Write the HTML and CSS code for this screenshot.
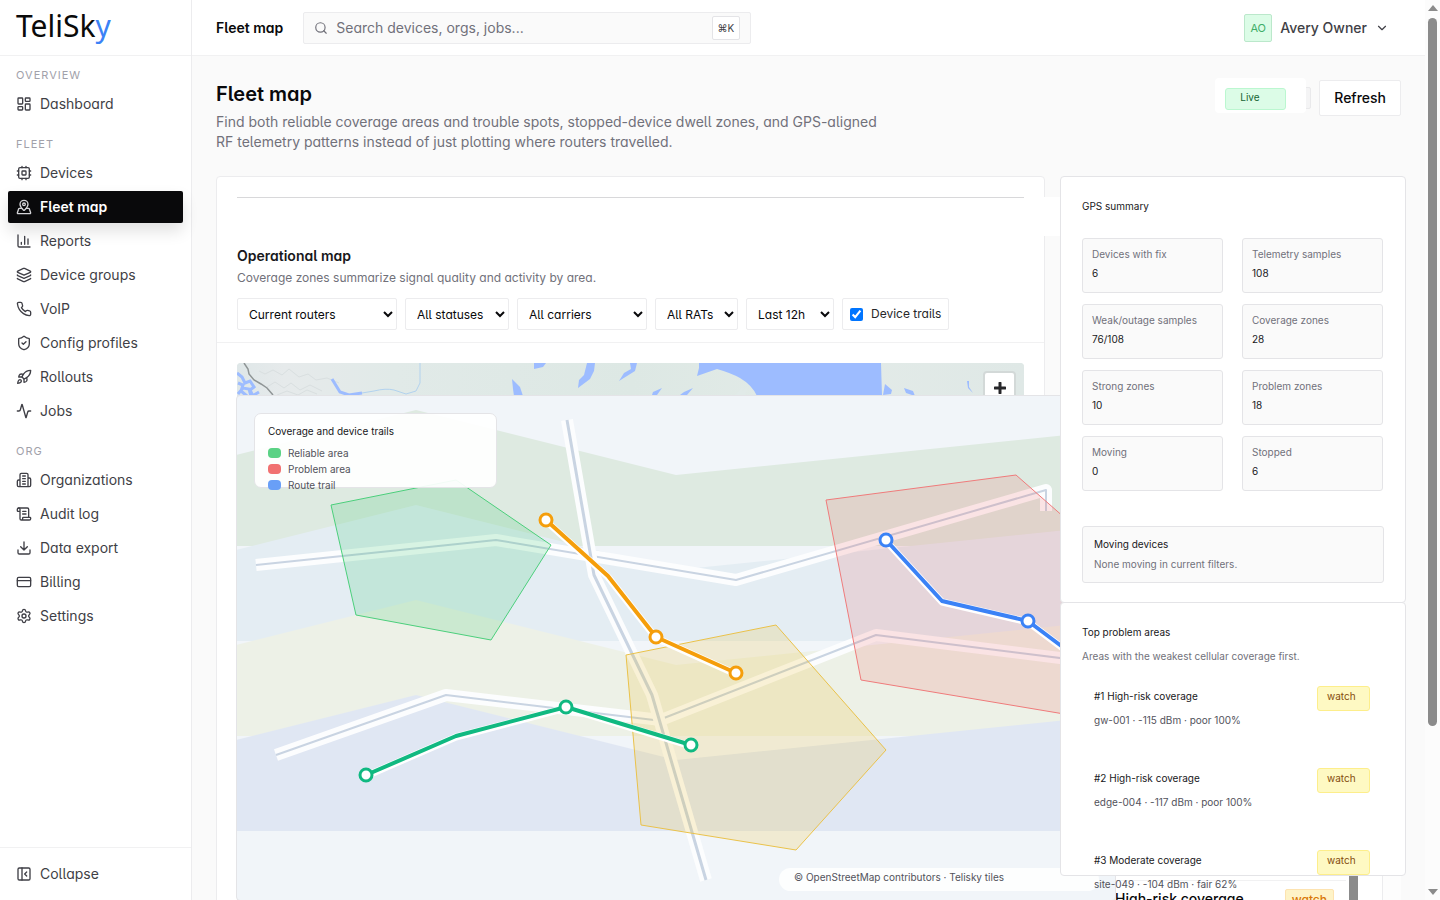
FILE: index.html
```html
<!DOCTYPE html>
<html lang="en">
<head>
<meta charset="utf-8">
<title>Fleet map - TeliSky</title>
<link rel="stylesheet" href="styles.css">
</head>
<body>
<div class="app">
  <aside class="sidebar">
    <a class="logo" href="#">TeliSk<span class="logo-accent">y</span></a>
    <nav class="nav">
      <div class="nav-group">
        <h2 class="nav-label">OVERVIEW</h2>
        <a class="nav-item" href="#"><svg class="icon" viewBox="0 0 24 24"><rect x="3" y="3" width="7" height="9" rx="1"/><rect x="14" y="3" width="7" height="5" rx="1"/><rect x="14" y="12" width="7" height="9" rx="1"/><rect x="3" y="16" width="7" height="5" rx="1"/></svg>Dashboard</a>
      </div>
      <div class="nav-group">
        <h2 class="nav-label">FLEET</h2>
        <a class="nav-item" href="#"><svg class="icon" viewBox="0 0 24 24"><rect x="4" y="4" width="16" height="16" rx="2"/><rect x="9" y="9" width="6" height="6" rx="1"/><path d="M15 2v2M15 20v2M2 15h2M2 9h2M20 15h2M20 9h2M9 2v2M9 20v2"/></svg>Devices</a>
        <a class="nav-item active" href="#"><svg class="icon" viewBox="0 0 24 24"><path d="M18 8c0 3.613-3.869 7.429-5.393 8.795a1 1 0 0 1-1.214 0C9.87 15.429 6 11.613 6 8a6 6 0 0 1 12 0"/><circle cx="12" cy="8" r="2"/><path d="M8.714 14h-3.71a1 1 0 0 0-.948.683l-2.004 6A1 1 0 0 0 3 22h18a1 1 0 0 0 .948-1.316l-2-6a1 1 0 0 0-.949-.684h-3.712"/></svg>Fleet map</a>
        <a class="nav-item" href="#"><svg class="icon" viewBox="0 0 24 24"><path d="M3 3v16a2 2 0 0 0 2 2h16M18 17V9M13 17V5M8 17v-3"/></svg>Reports</a>
        <a class="nav-item" href="#"><svg class="icon" viewBox="0 0 24 24"><path d="M12.83 2.18a2 2 0 0 0-1.66 0L2.6 6.08a1 1 0 0 0 0 1.83l8.58 3.91a2 2 0 0 0 1.66 0l8.58-3.9a1 1 0 0 0 0-1.83z"/><path d="M2 12a1 1 0 0 0 .58.91l8.6 3.91a2 2 0 0 0 1.65 0l8.58-3.9A1 1 0 0 0 22 12"/><path d="M2 17a1 1 0 0 0 .58.91l8.6 3.91a2 2 0 0 0 1.65 0l8.58-3.9A1 1 0 0 0 22 17"/></svg>Device groups</a>
        <a class="nav-item" href="#"><svg class="icon" viewBox="0 0 24 24"><path d="M22 16.92v3a2 2 0 0 1-2.18 2 19.79 19.79 0 0 1-8.63-3.07 19.5 19.5 0 0 1-6-6 19.79 19.79 0 0 1-3.07-8.67A2 2 0 0 1 4.11 2h3a2 2 0 0 1 2 1.72c.127.96.361 1.903.7 2.81a2 2 0 0 1-.45 2.11L8.09 9.91a16 16 0 0 0 6 6l1.27-1.27a2 2 0 0 1 2.11-.45c.907.339 1.85.573 2.81.7A2 2 0 0 1 22 16.92z"/></svg>VoIP</a>
        <a class="nav-item" href="#"><svg class="icon" viewBox="0 0 24 24"><path d="M20 13c0 5-3.5 7.5-7.66 8.95a1 1 0 0 1-.67-.01C7.5 20.5 4 18 4 13V6a1 1 0 0 1 1-1c2 0 4.5-1.2 6.24-2.72a1.17 1.17 0 0 1 1.52 0C14.51 3.81 17 5 19 5a1 1 0 0 1 1 1z"/><path d="m9 12 2 2 4-4"/></svg>Config profiles</a>
        <a class="nav-item" href="#"><svg class="icon" viewBox="0 0 24 24"><path d="M4.5 16.5c-1.5 1.26-2 5-2 5s3.74-.5 5-2c.71-.84.7-2.13-.09-2.91a2.18 2.18 0 0 0-2.91-.09zM12 15l-3-3a22 22 0 0 1 2-3.95A12.88 12.88 0 0 1 22 2c0 2.72-.78 7.5-6 11a22.35 22.35 0 0 1-4 2z"/><path d="M9 12H4s.55-3.03 2-4c1.62-1.08 5 0 5 0M12 15v5s3.03-.55 4-2c1.08-1.62 0-5 0-5"/></svg>Rollouts</a>
        <a class="nav-item" href="#"><svg class="icon" viewBox="0 0 24 24"><path d="M22 12h-2.48a2 2 0 0 0-1.93 1.46l-2.35 8.36a.25.25 0 0 1-.48 0L9.24 2.18a.25.25 0 0 0-.48 0l-2.35 8.36A2 2 0 0 1 4.49 12H2"/></svg>Jobs</a>
      </div>
      <div class="nav-group">
        <h2 class="nav-label">ORG</h2>
        <a class="nav-item" href="#"><svg class="icon" viewBox="0 0 24 24"><path d="M6 22V4a2 2 0 0 1 2-2h8a2 2 0 0 1 2 2v18ZM6 12H4a2 2 0 0 0-2 2v6a2 2 0 0 0 2 2h2M18 9h2a2 2 0 0 1 2 2v9a2 2 0 0 1-2 2h-2M10 6h4M10 10h4M10 14h4M10 18h4"/></svg>Organizations</a>
        <a class="nav-item" href="#"><svg class="icon" viewBox="0 0 24 24"><path d="M15 12h-5M15 8h-5M19 17V5a2 2 0 0 0-2-2H4"/><path d="M8 21h12a2 2 0 0 0 2-2v-1a1 1 0 0 0-1-1H11a1 1 0 0 0-1 1v1a2 2 0 1 1-4 0V5a2 2 0 1 0-4 0v2a1 1 0 0 0 1 1h3"/></svg>Audit log</a>
        <a class="nav-item" href="#"><svg class="icon" viewBox="0 0 24 24"><path d="M12 15V3M21 15v4a2 2 0 0 1-2 2H5a2 2 0 0 1-2-2v-4M7 10l5 5 5-5"/></svg>Data export</a>
        <a class="nav-item" href="#"><svg class="icon" viewBox="0 0 24 24"><rect x="2" y="5" width="20" height="14" rx="2"/><path d="M2 10h20"/></svg>Billing</a>
        <a class="nav-item" href="#"><svg class="icon" viewBox="0 0 24 24"><path d="M9.671 4.136a2.34 2.34 0 0 1 4.659 0 2.34 2.34 0 0 0 3.319 1.915 2.34 2.34 0 0 1 2.33 4.033 2.34 2.34 0 0 0 0 3.831 2.34 2.34 0 0 1-2.33 4.033 2.34 2.34 0 0 0-3.319 1.915 2.34 2.34 0 0 1-4.659 0 2.34 2.34 0 0 0-3.32-1.915 2.34 2.34 0 0 1-2.33-4.033 2.34 2.34 0 0 0 0-3.831A2.34 2.34 0 0 1 6.35 6.051a2.34 2.34 0 0 0 3.319-1.915"/><circle cx="12" cy="12" r="3"/></svg>Settings</a>
      </div>
    </nav>
    <div class="sidebar-foot">
      <button class="nav-item" type="button"><svg class="icon" viewBox="0 0 24 24"><rect x="3" y="3" width="18" height="18" rx="2"/><path d="M9 3v18M16 15l-3-3 3-3"/></svg>Collapse</button>
    </div>
  </aside>

  <div class="workspace">
    <header class="topbar">
      <strong class="crumb">Fleet map</strong>
      <div class="search">
        <svg class="search-icon" viewBox="0 0 24 24"><circle cx="11" cy="11" r="8"/><path d="m21 21-4.3-4.3"/></svg>
        <input class="search-input" type="search" aria-label="Search" placeholder="Search devices, orgs, jobs...">
        <kbd class="kbd">⌘K</kbd>
      </div>
      <button class="account" type="button"><span class="avatar">AO</span>Avery Owner<svg class="chev" viewBox="0 0 24 24"><path d="m6 9 6 6 6-6"/></svg></button>
    </header>

    <main class="content">
      <div class="page-head">
        <div class="page-intro">
          <h1 class="page-title">Fleet map</h1>
          <p class="page-desc">Find both reliable coverage areas and trouble spots, stopped-device dwell zones, and GPS-aligned RF telemetry patterns instead of just plotting where routers travelled.</p>
        </div>
        <div class="page-actions">
          <div class="status-chip"><div class="live-box"><span class="live">Live</span></div></div>
          <button class="refresh" type="button">Refresh</button>
        </div>
      </div>

      <div class="columns">
        <section class="map-card">
          <div class="banner"><div class="banner-rule"></div></div>
          <div class="map-head">
            <h2 class="map-title">Operational map</h2>
            <p class="map-desc">Coverage zones summarize signal quality and activity by area.</p>
            <div class="filters">
              <select class="filter f-routers" aria-label="Routers"><option>Current routers</option></select>
              <select class="filter f-status" aria-label="Status"><option>All statuses</option></select>
              <select class="filter f-carrier" aria-label="Carrier"><option>All carriers</option></select>
              <select class="filter f-rat" aria-label="RAT"><option>All RATs</option></select>
              <select class="filter f-range" aria-label="Time range"><option>Last 12h</option></select>
              <label class="filter-check"><input class="check" type="checkbox" checked>Device trails</label>
            </div>
          </div>
          <div class="map-body">
            <div class="basemap">
              <svg class="terrain" viewBox="0 0 788 40" preserveAspectRatio="xMinYMin slice">
                <defs>
                  <linearGradient id="land" x1="0" x2="1" y1="0" y2="0"><stop offset="0" stop-color="#dfe7e8"/><stop offset=".06" stop-color="#e6eaeb"/><stop offset=".2" stop-color="#e1eae8"/><stop offset=".5" stop-color="#dde8e4"/><stop offset=".75" stop-color="#e3ebe8"/><stop offset="1" stop-color="#dfe8e6"/></linearGradient>
                </defs>
                <rect width="788" height="40" fill="url(#land)"/>
                <path d="M22 8l6 3 8-4 9 5 7-6 10 8 9-3 8 6 11-2 12 5M30 24l8-5 9 6 7-5 9 7 10-5 12 6M40 32l10-4 11 4 9-5 10 4" fill="none" stroke="#d9dfe0" stroke-width="1"/>
                <path d="M7 0l4 6 1 5 5 6 7 4 6 4 6 7" fill="none" stroke="#8f9596" stroke-width="1.5"/>
                <g fill="#9dbcff">
                  <path d="M462 0v5l-2 8 20-7q14 4 23 9 12 7 17 18h125l-1-33z"/>
                  <path d="M297 0h12l-3 4-9 2zM350 0h8l-1 8-4 8-12 9 1-8 5-5zM393 0h7l-2 8-8 5-8 5 5-8 7-4zM416 29l9-4-5 7h-5zM447 29l9-4-6 7h-7zM275 16l8 8 3 9h-9l-1-7zM648 21l7 6-1 4-8 1zM667 25l9 3 2 5-9-3zM730 18l2 0v6l4 6-5-5z"/>
                </g>
                <path d="M499 32l5-6 2-4-1 6 6-4-3 8z" fill="#e1eae8"/>
                <path d="M0 10l5 4 3 6 5-2 4 6-4 3 3 6M1 20l5 2-2 6 6 5M1 31l5-6 6 1 2 7M17 32l5-3" fill="none" stroke="#9dbcff" stroke-width="3"/>
                <path d="M95 16l8 13 9 3 13-2" fill="none" stroke="#9dbcff" stroke-width="3"/>
                <path d="M125 30l12-2q12-3 20-1l12 4 10-3 4-8V0" fill="none" stroke="#b2d2ee" stroke-width="1"/>
              </svg>
              <button class="zoom-in" type="button" aria-label="Zoom in"><svg class="plus" viewBox="0 0 12 12"><path d="M6 1v10M1 6h10"/></svg></button>
            </div>
            <div class="coverage">
              <svg class="coverage-art" viewBox="0 0 880 506" preserveAspectRatio="xMinYMin slice">
                <path fill="#deeae1" d="M0 60 180 15 440 80 880 35V151H0z"/>
                <path fill="#e4edf3" d="M0 155 180 110 440 175 880 130V246H0z"/>
                <path fill="#edf1e7" d="M0 250 180 205 440 270 880 225V341H0z"/>
                <path fill="#e0e7f3" d="M0 345 180 300 440 365 880 320V436H0z"/>
                <g fill="none" stroke-linejoin="round">
                  <path stroke="#fcfdfe" stroke-width="12" d="M20 170 260 145 500 185 810 95V116M40 360 210 300 425 325 640 240 880 270"/>
                  <path stroke="#c9d4e2" stroke-width="2" d="M20 170 260 145 500 185 810 95V116M40 360 210 300 418 325M428 323 640 240 880 270"/>
                  <path stroke="#fcfdfe" stroke-width="12" d="M331 25 358 180 416 300 470 485"/>
                  <path stroke="#c9d4e2" stroke-width="3" d="M331 25 358 180 416 300 470 485"/>
                </g>
                <path fill="#22c55e" fill-opacity=".17" stroke="#4ccf7c" d="M95 110 220 85 315 150 255 245 120 220z"/>
                <path fill="#ef4444" fill-opacity=".14" stroke="#ef7b7b" d="M590 105 780 80 870 159V326L625 285z"/>
                <path fill="#eab308" fill-opacity=".16" stroke="#eac24a" d="M390 260 540 230 650 355 560 455 405 430z"/>
                <g fill="none" stroke="#fff" stroke-width="7" stroke-linejoin="round">
                  <path d="M310 126 372 182 420 243 500 279"/>
                  <path d="M650 146 706 207 792 227 860 278"/>
                  <path d="M130 381 220 342 330 313 455 351"/>
                </g>
                <g fill="none" stroke-width="4" stroke-linejoin="round">
                  <path stroke="#f59e0b" d="M310 125 372 181 420 242 500 278"/>
                  <path stroke="#3b82f6" d="M650 145 706 206 792 226 860 277"/>
                  <path stroke="#10b981" d="M130 380 220 341 330 312 455 350"/>
                </g>
                <g fill="#fff" stroke-width="3">
                  <g stroke="#f59e0b"><circle cx="310" cy="125" r="6"/><circle cx="420" cy="242" r="6"/><circle cx="500" cy="278" r="6"/></g>
                  <g stroke="#3b82f6"><circle cx="650" cy="145" r="6"/><circle cx="792" cy="226" r="6"/></g>
                  <g stroke="#10b981"><circle cx="130" cy="380" r="6"/><circle cx="330" cy="312" r="6"/><circle cx="455" cy="350" r="6"/></g>
                </g>
              </svg>
              <div class="legend">
                <h3 class="legend-title">Coverage and device trails</h3>
                <ul class="legend-list">
                  <li class="legend-item"><i class="swatch s-green"></i>Reliable area</li>
                  <li class="legend-item"><i class="swatch s-red"></i>Problem area</li>
                  <li class="legend-item"><i class="swatch s-blue"></i>Route trail</li>
                </ul>
              </div>
              <div class="credit">© OpenStreetMap contributors · Telisky tiles</div>
            </div>
          </div>
        </section>

        <aside class="rail">
          <section class="panel">
            <h2 class="panel-title">GPS summary</h2>
            <dl class="stats">
              <div class="stat"><dt>Devices with fix</dt><dd>6</dd></div>
              <div class="stat"><dt>Telemetry samples</dt><dd>108</dd></div>
              <div class="stat"><dt>Weak/outage samples</dt><dd>76/108</dd></div>
              <div class="stat"><dt>Coverage zones</dt><dd>28</dd></div>
              <div class="stat"><dt>Strong zones</dt><dd>10</dd></div>
              <div class="stat"><dt>Problem zones</dt><dd>18</dd></div>
              <div class="stat"><dt>Moving</dt><dd>0</dd></div>
              <div class="stat"><dt>Stopped</dt><dd>6</dd></div>
            </dl>
            <div class="moving">
              <h3 class="moving-title">Moving devices</h3>
              <p class="moving-text">None moving in current filters.</p>
            </div>
          </section>
          <section class="panel areas-panel">
            <h2 class="panel-title">Top problem areas</h2>
            <p class="panel-sub">Areas with the weakest cellular coverage first.</p>
            <ul class="areas">
              <li class="area"><div><div class="area-name">#1 High-risk coverage</div><div class="area-meta">gw-001 · -115 dBm · poor 100%</div></div><span class="watch">watch</span></li>
              <li class="area"><div><div class="area-name">#2 High-risk coverage</div><div class="area-meta">edge-004 · -117 dBm · poor 100%</div></div><span class="watch">watch</span></li>
              <li class="area"><div><div class="area-name">#3 Moderate coverage</div><div class="area-meta">site-049 · -104 dBm · fair 62%</div></div><span class="watch">watch</span></li>
            </ul>
          </section>
          <section class="backlist">
            <div class="backlist-inner">
              <div class="backlist-row"><span>High-risk coverage</span><span class="back-watch">watch</span></div>
              <div class="backlist-thumb"></div>
            </div>
          </section>
        </aside>
      </div>
    </main>
  </div>

  <div class="scrollbar" aria-hidden="true">
    <div class="arrow-up"></div>
    <div class="track"><div class="thumb"></div></div>
    <div class="arrow-down"></div>
  </div>
</div>
</body>
</html>
```
FILE: styles.css
```css
* { box-sizing: border-box; }

body {
  margin: 0;
  font-family: Inter, "Liberation Sans", sans-serif;
  font-size: 14px;
  line-height: 20px;
  color: #09090b;
  background: #fafafa;
  font-feature-settings: "cv11", "cv05";
}

h1, h2, h3, p, ul, dl, dd { margin: 0; padding: 0; }
ul { list-style: none; }
a { color: inherit; text-decoration: none; }
button, input, select { font: inherit; font-feature-settings: inherit; color: inherit; }

.app { display: flex; height: 100vh; overflow: hidden; }

/* Sidebar */
.sidebar {
  flex: 0 0 192px;
  display: flex;
  flex-direction: column;
  background: #fff;
  border-right: 1px solid #ececee;
}
.logo {
  display: flex;
  align-items: center;
  height: 56px;
  padding: 0 16px 4px;
  border-bottom: 1px solid #f1f1f2;
  font-family: "Noto Sans", sans-serif;
  font-size: 30px;
  color: #0a0a0a;
}
.logo-accent { color: #3b82f6; }
.nav {
  flex: 1;
  display: flex;
  flex-direction: column;
  gap: 16px;
  padding: 11px 8px;
}
.nav-group { display: flex; flex-direction: column; gap: 2px; }
.nav-label {
  padding: 0 8px;
  margin-bottom: 3px;
  font-size: 11px;
  line-height: 16px;
  font-weight: 400;
  letter-spacing: 1px;
  color: #a1a1aa;
}
.nav-item {
  display: flex;
  align-items: center;
  gap: 8px;
  height: 32px;
  padding: 0 8px;
  border: 0;
  border-radius: 2px;
  background: none;
  font-weight: 400;
  color: #3f3f46;
}
.nav-item.active {
  background: #09090b;
  color: #fff;
  font-weight: 600;
  box-shadow: 0 8px 16px rgba(0, 0, 0, .12);
}
.icon {
  width: 16px;
  height: 16px;
  fill: none;
  stroke: currentColor;
  stroke-width: 2;
  stroke-linecap: round;
  stroke-linejoin: round;
}
.active .icon { stroke: #d4d4d8; }
.sidebar-foot { padding: 10px 8px; border-top: 1px solid #f1f1f2; }

/* Top bar */
.workspace { flex: 1; min-width: 0; display: flex; flex-direction: column; }
.topbar {
  flex: none;
  display: flex;
  align-items: center;
  gap: 20px;
  height: 56px;
  padding: 0 36px 0 24px;
  background: #fff;
  border-bottom: 1px solid #f1f1f2;
}
.crumb { font-weight: 600; }
.search {
  flex: 0 1 448px;
  display: flex;
  align-items: center;
  gap: 8px;
  height: 32px;
  padding: 0 10px;
  border: 1px solid #ececee;
  border-radius: 2px;
  background: #fafafa;
}
.search-icon {
  width: 14px;
  height: 14px;
  fill: none;
  stroke: #71717a;
  stroke-width: 2;
  stroke-linecap: round;
}
.search-input {
  flex: 1;
  min-width: 0;
  padding: 0;
  border: 0;
  outline: 0;
  background: none;
}
.search-input::placeholder { color: #71717a; opacity: 1; }
.kbd {
  padding: 0 5px;
  border: 1px solid #e4e4e7;
  border-radius: 2px;
  background: #fff;
  font-family: Inter, "DejaVu Sans", sans-serif;
  font-size: 10px;
  line-height: 22px;
  color: #3f3f46;
}
.account {
  display: flex;
  align-items: center;
  gap: 8px;
  margin-left: auto;
  padding: 0;
  border: 0;
  background: none;
  font-weight: 500;
  color: #3f3f46;
}
.avatar {
  width: 28px;
  border: 1px solid #bbe8cb;
  border-radius: 2px;
  background: #dcfce7;
  font-size: 11px;
  line-height: 26px;
  font-weight: 400;
  text-align: center;
  color: #3fae68;
}
.chev {
  width: 14px;
  height: 14px;
  fill: none;
  stroke: #3f3f46;
  stroke-width: 2;
  stroke-linecap: round;
  stroke-linejoin: round;
}

/* Page */
.content {
  flex: 1;
  min-height: 0;
  overflow: hidden;
  padding: 24px 19px 0 24px;
}
.page-head {
  display: flex;
  justify-content: space-between;
  align-items: flex-start;
  padding-right: 5px;
  margin-bottom: 24px;
}
.page-intro { max-width: 672px; }
.page-title { margin-bottom: 4px; font-size: 20px; line-height: 28px; font-weight: 600; }
.page-desc { color: #71717a; }
.page-actions { display: flex; align-items: center; gap: 8px; }
.status-chip {
  position: relative;
  width: 84px;
  height: 22px;
  border: 1px solid #e9e9eb;
  border-radius: 2px;
  background: #f4f4f5;
}
.live-box {
  position: absolute;
  top: -10px;
  right: 4px;
  width: 91px;
  padding: 10px;
  height: 35px;
  border-radius: 4px;
  background: #fff;
}
.live {
  display: block;
  width: 61px;
  height: 22px;
  padding-left: 14px;
  border: 1px solid #bbf7d0;
  border-radius: 3px;
  background: #dcfce7;
  font-size: 10px;
  line-height: 16px;
  color: #166534;
  font-feature-settings: normal;
}
.refresh {
  height: 36px;
  padding: 0 14px;
  border: 1px solid #ececee;
  border-radius: 2px;
  background: #fff;
  font-weight: 500;
}

.columns {
  display: grid;
  grid-template-columns: 829fr 346fr;
  align-items: start;
  gap: 15px;
}

/* Map card */
.map-card {
  border: 1px solid #ececee;
  border-radius: 4px;
  background: #fff;
  padding-top: 20px;
}
.banner {
  position: relative;
  height: 39px;
  margin: 0 -16px 0 20px;
  padding-right: 36px;
  background: #fff;
}
.banner-rule { height: 1px; background: #d8d8da; }
.map-head { padding: 10px 20px 12px; border-bottom: 1px solid #f1f1f2; }
.map-title { font-size: 14px; line-height: 20px; font-weight: 600; color: #18181b; }
.map-desc { margin: 3px 0 11px; font-size: 12px; line-height: 18px; color: #71717a; }
.filters { display: flex; gap: 8px; }
.filter {
  height: 32px;
  padding: 0 0 0 7px;
  border: 1px solid #ececee;
  border-radius: 2px;
  background: #fff;
  font-size: 12px;
  color: #09090b;
}
.f-routers { width: 160px; }
.f-status { width: 104px; }
.f-carrier { width: 130px; }
.f-rat { width: 83px; }
.f-range { width: 88px; }
.filter-check {
  display: flex;
  align-items: center;
  gap: 8px;
  height: 32px;
  padding: 0 7px;
  border: 1px solid #ececee;
  border-radius: 2px;
  font-size: 12px;
  color: #27272a;
}
.check { width: 13px; height: 13px; margin: 0; accent-color: #0075ff; }

.map-body { position: relative; padding: 20px 20px 0; }
.basemap {
  position: relative;
  height: 540px;
  overflow: hidden;
  border-radius: 4px 4px 0 0;
  background: #e1eae8;
}
.terrain { display: block; width: 100%; height: 40px; }
.zoom-in {
  position: absolute;
  top: 8px;
  right: 8px;
  width: 33px;
  height: 33px;
  display: grid;
  place-items: center;
  padding: 0;
  border: 2px solid #d3d9d8;
  border-radius: 4px;
  background: #fff;
}
.plus { width: 12px; height: 12px; fill: none; stroke: #27272a; stroke-width: 3; stroke-linecap: round; }

.coverage {
  position: absolute;
  z-index: 1;
  top: 52px;
  left: 19px;
  width: 880px;
  height: 506px;
  overflow: hidden;
  border: 1px solid #e4e4e7;
  border-radius: 4px;
  background: #f1f5f9;
}
.coverage-art { display: block; width: 880px; height: 506px; margin: -1px; }
.legend {
  position: absolute;
  top: 17px;
  left: 17px;
  width: 243px;
  height: 75px;
  padding: 9px 13px;
  border: 1px solid #e4e4e7;
  border-radius: 7px;
  background: rgba(255, 255, 255, .93);
  font-size: 10px;
  line-height: 16px;
  font-feature-settings: normal;
}
.legend-title { margin-bottom: 6px; font-size: 10px; line-height: 16px; font-weight: 400; color: #18181b; }
.legend-item { display: flex; align-items: center; gap: 7px; color: #52525b; }
.swatch { width: 13px; height: 10px; border-radius: 4px; }
.s-green { background: #5ad285; }
.s-red { background: #f17171; }
.s-blue { background: #699ff7; }
.credit {
  position: absolute;
  right: 16px;
  bottom: 9px;
  width: 320px;
  padding: 0 15px 4px;
  border-radius: 12px;
  background: #fdfefe;
  font-size: 10px;
  line-height: 19px;
  color: #52525b;
  font-feature-settings: normal;
}

/* Right rail */
.rail { font-size: 10px; line-height: 16px; font-feature-settings: normal; }
.panel {
  position: relative;
  z-index: 2;
  padding: 21px 21px 19px;
  border: 1px solid #e4e4e7;
  border-radius: 4px;
  background: #fff;
}
.panel-title { font-size: 10px; line-height: 16px; font-weight: 400; color: #18181b; }
.stats {
  display: grid;
  grid-template-columns: 1fr 1fr;
  column-gap: 19px;
  row-gap: 11px;
  margin: 24px 1px 35px 0;
}
.stat {
  height: 55px;
  padding: 7px 9px;
  border: 1px solid #e4e4e7;
  border-radius: 3px;
  background: #fafafa;
}
.stat dt { color: #71717a; }
.stat dd { margin-top: 3px; color: #18181b; }
.moving {
  height: 57px;
  padding: 9px 11px;
  border: 1px solid #e4e4e7;
  border-radius: 3px;
  background: #fafafa;
}
.moving-title { margin-bottom: 4px; font-size: 10px; line-height: 16px; font-weight: 400; color: #18181b; }
.moving-text { color: #71717a; }
.areas-panel { margin-top: -1px; height: 274px; }
.panel-sub { margin-top: 8px; color: #71717a; }
.areas { display: flex; flex-direction: column; gap: 42px; margin-top: 24px; padding: 0 14px 0 12px; }
.area { display: flex; justify-content: space-between; height: 40px; }
.area-name { color: #18181b; }
.area-meta { margin-top: 8px; color: #52525b; }
.watch {
  width: 53px;
  height: 25px;
  margin-top: -2px;
  padding-left: 9px;
  border: 1px solid #fdee8b;
  border-radius: 3px;
  background: #fef9c3;
  line-height: 18px;
  color: #854d0e;
}
.backlist { margin-right: 5px; padding-right: 18px; background: #fdfdfd; }
.backlist-inner {
  display: flex;
  justify-content: space-between;
  height: 80px;
  padding-left: 55px;
  padding-right: 24px;
  border-right: 1px solid #ececee;
  background: #fff;
  font-size: 14px;
  line-height: 20px;
  font-feature-settings: "cv11", "cv05";
}
.backlist-row {
  flex: 1;
  display: flex;
  justify-content: space-between;
  align-items: flex-start;
  margin: 4px 3px 0 0;
  padding: 8px 12px 0 0;
  border-top: 1px solid #f1f1f2;
  font-weight: 500;
}
.back-watch {
  padding: 0 6px;
  border: 1px solid #fde3b0;
  border-radius: 2px;
  background: #fef3c7;
  font-size: 12px;
  color: #d97706;
}
.backlist-thumb { width: 9px; background: #8b8b8b; }

/* Window scrollbar */
.scrollbar {
  flex: 0 0 15px;
  display: flex;
  flex-direction: column;
  align-items: center;
  padding: 5px 0;
  background: #fcfcfc;
}
.arrow-up, .arrow-down { border: 5px solid transparent; }
.arrow-up { border-top: 0; border-bottom: 6px solid #8b8b8b; }
.arrow-down { border-bottom: 0; border-top: 6px solid #8b8b8b; }
.track { flex: 1; width: 9px; padding: 7px 0; }
.thumb { height: 82%; border-radius: 5px; background: #8b8b8b; }
```
